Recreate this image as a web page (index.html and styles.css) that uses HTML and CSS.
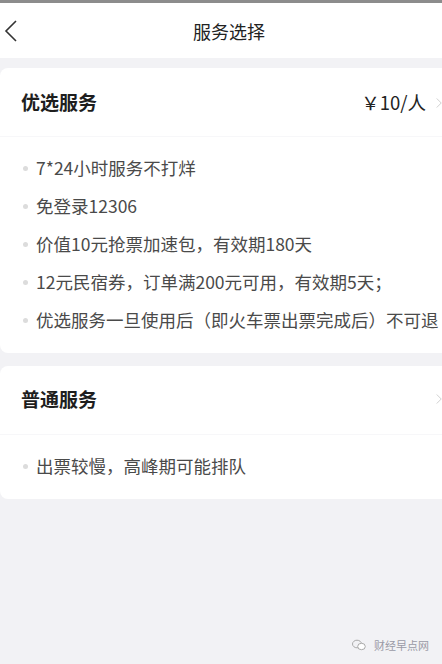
FILE: index.html
```html
<!DOCTYPE html>
<html lang="zh">
<head>
<meta charset="utf-8">
<title>服务选择</title>
<link rel="stylesheet" href="styles.css">
</head>
<body>
<div class="topbar"></div>
<header class="nav">
  <span class="back"><svg width="14" height="24" viewBox="0 0 14 24"><path d="M12 2 L2 12 L12 22" fill="none" stroke="#333" stroke-width="1.6"/></svg></span>
  <h1 class="nav-title">服务选择</h1>
</header>
<main class="content">
  <section class="card">
    <div class="card-head">
      <span class="card-title">优选服务</span>
      <span class="price">￥10/人</span>
      <span class="chev"><svg width="8" height="14" viewBox="0 0 8 14"><path d="M1 1 L7 7 L1 13" fill="none" stroke="#cfcfcf" stroke-width="1.3"/></svg></span>
    </div>
    <ul class="list">
      <li>7*24小时服务不打烊</li>
      <li>免登录12306</li>
      <li>价值10元抢票加速包，有效期180天</li>
      <li>12元民宿券，订单满200元可用，有效期5天；</li>
      <li>优选服务一旦使用后（即火车票出票完成后）不可退</li>
    </ul>
  </section>
  <section class="card card-2">
    <div class="card-head">
      <span class="card-title">普通服务</span>
      <span class="chev"><svg width="8" height="14" viewBox="0 0 8 14"><path d="M1 1 L7 7 L1 13" fill="none" stroke="#cfcfcf" stroke-width="1.3"/></svg></span>
    </div>
    <ul class="list">
      <li>出票较慢，高峰期可能排队</li>
    </ul>
  </section>
</main>
<div class="watermark">
  <svg width="14" height="12" viewBox="0 0 14 12"><ellipse cx="5" cy="5" rx="4.5" ry="3.8" fill="none" stroke="#aaa" stroke-width="1"/><ellipse cx="9.5" cy="7.5" rx="3.8" ry="3.2" fill="#fff" stroke="#aaa" stroke-width="1"/></svg>
  <span>财经早点网</span>
</div>
</body>
</html>
```
FILE: styles.css
```css
html, body {
  margin: 0;
  padding: 0;
}
body {
  width: 442px;
  height: 664px;
  overflow: hidden;
  background: #f2f2f5;
  font-family: "Noto Sans CJK SC", "Noto Sans", sans-serif;
  position: relative;
}
.topbar {
  height: 3px;
  background: #8c8c8c;
}
.nav {
  height: 55px;
  background: #fff;
  display: flex;
  align-items: center;
}
.back {
  width: 14px;
  height: 24px;
  margin-left: 4px;
  display: flex;
}
.nav-title {
  margin: 0 0 0 175px;
  font-size: 18px;
  font-weight: 400;
  color: #222;
  line-height: 24px;
}
.content {
  padding-top: 10px;
  display: flex;
  flex-direction: column;
  gap: 13px;
}
.card {
  background: #fff;
  border-radius: 8px 0 0 8px;
}
.card-head {
  height: 68px;
  display: flex;
  align-items: center;
  padding-left: 21px;
  border-bottom: 1px solid #f7f7f9;
}
.card-title {
  font-size: 19px;
  font-weight: 700;
  color: #1e1e1e;
  flex: 1;
  padding-bottom: 1px;
}
.price {
  font-size: 18.5px;
  color: #222;
  margin-right: 10px;
}
.chev {
  width: 6px;
  overflow: hidden;
  display: flex;
  margin-left: auto;
  margin-top: 2px;
}
.card-2 .chev {
  margin-top: -2px;
}
.card-2 .card-title {
  padding-bottom: 4px;
}
.list {
  list-style: none;
  margin: 0;
  padding: 12px 0 14px 0;
}
.list li {
  height: 38px;
  line-height: 38px;
  font-size: 17.5px;
  color: #4a4a4a;
  padding-left: 36px;
  position: relative;
  white-space: nowrap;
}
.list li::before {
  content: "";
  position: absolute;
  left: 23px;
  top: 17px;
  width: 5px;
  height: 5px;
  border-radius: 50%;
  background: #dcdcdc;
}
.watermark {
  position: absolute;
  left: 352px;
  top: 637px;
  display: flex;
  align-items: center;
  gap: 8px;
  font-size: 11px;
  color: #9a9aa6;
}
```
